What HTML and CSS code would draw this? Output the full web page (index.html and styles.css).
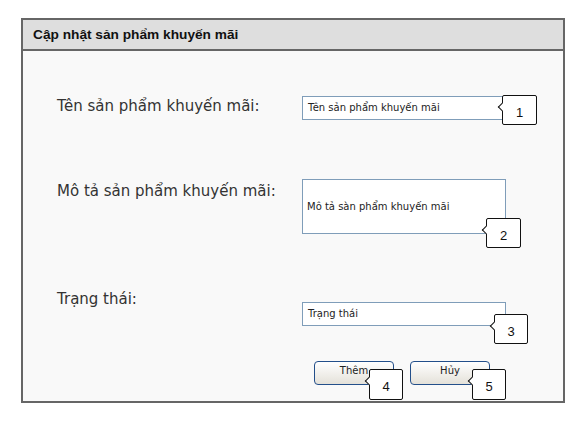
FILE: index.html
```
<!DOCTYPE html>
<html lang="vi">

<head>
    <meta charset="UTF-8">
    <title>Cập nhật sản phẩm khuyến mãi</title>
    <link rel="stylesheet" href="styles.css">
</head>

<body>

    <section class="khung">
        <h1 class="tieude">Cập nhật sản phẩm khuyến mãi</h1>

        <div class="noidung">
            <div class="dong dong1">
                <label class="nhan">Tên sản phẩm khuyến mãi:</label>
                <div class="truong">
                    <div class="o">Tên sản phẩm khuyến mãi</div>
                    <span class="chu so1">1</span>
                </div>
            </div>

            <div class="dong dong2">
                <label class="nhan">Mô tả sản phẩm khuyến mãi:</label>
                <div class="truong">
                    <div class="o o-lon">Mô tả sàn phẩm khuyến mãi</div>
                    <span class="chu so2">2</span>
                </div>
            </div>

            <div class="dong dong3">
                <label class="nhan">Trạng thái:</label>
                <div class="truong">
                    <div class="o">Trạng thái</div>
                    <span class="chu so3">3</span>
                </div>
            </div>

            <nav class="nut-hang">
                <div class="nut-boc">
                    <button class="nut">Thêm</button>
                    <span class="chu so4">4</span>
                </div>
                <div class="nut-boc">
                    <button class="nut">Hủy</button>
                    <span class="chu so5">5</span>
                </div>
            </nav>
        </div>
    </section>

</body>

</html>
```

FILE: styles.css
```
body {
    margin: 0;
    background-color: #ffffff;
    font-family: "DejaVu Sans", Tahoma, sans-serif;
    color: #222222;
}

.khung {
    margin: 18px 0 0 21px;
    width: 544px;
    height: 385px;
    box-sizing: border-box;
    border: 2px solid #666666;
    background-color: #f9f9f9;
}

.tieude {
    margin: 0;
    height: 31px;
    box-sizing: border-box;
    padding: 7px 0 0 10px;
    background-color: #dedede;
    border-bottom: 2px solid #666666;
    font-family: "Liberation Sans", Arial, sans-serif;
    font-size: 13.7px;
    font-weight: bold;
    color: #111111;
}

.noidung {
    padding: 45px 0 0 34px;
}

.dong {
    display: grid;
    grid-template-columns: 245px 204px;
    align-items: start;
}

.nhan {
    font-size: 15px;
    line-height: 20px;
    color: #333333;
}

.truong {
    position: relative;
}

.o {
    height: 24px;
    box-sizing: border-box;
    border: 1px solid #7f9db9;
    background-color: #ffffff;
    padding: 0 5px;
    font-size: 10px;
    line-height: 22px;
    color: #222222;
}

.o-lon {
    height: 55px;
    line-height: 53px;
    padding-left: 4px;
}

.dong2 {
    margin-top: 59px;
}

.dong2 .nhan {
    margin-top: 2px;
}

.dong3 {
    margin-top: 55px;
}

.dong3 .truong {
    margin-top: 13px;
}

.nut-hang {
    display: flex;
    gap: 16px;
    margin: 33px 0 0 257px;
}

.nut-boc {
    position: relative;
}

.nut {
    width: 80px;
    height: 24px;
    border: 1px solid #234f8a;
    border-radius: 4px;
    background: linear-gradient(#ffffff, #e4e1d9);
    font-family: "DejaVu Sans", Tahoma, sans-serif;
    font-size: 10px;
    color: #222222;
    padding: 0 0 4px 0;
}

/* chu thich so */
.chu {
    position: absolute;
    width: 35px;
    height: 30px;
    box-sizing: border-box;
    border: 1px solid #111111;
    border-radius: 2px;
    background-color: #ffffff;
    font-family: "Liberation Sans", Arial, sans-serif;
    font-size: 13px;
    line-height: 30px;
    text-align: center;
    padding-top: 2px;
    color: #111111;
}

.chu::before {
    content: "";
    position: absolute;
    left: -4px;
    top: 8px;
    width: 5px;
    height: 5px;
    background-color: #ffffff;
    border-left: 1px solid #111111;
    border-bottom: 1px solid #111111;
    transform: rotate(45deg);
}

.so1 {
    left: 200px;
    top: -1px;
}

.so2 {
    left: 184px;
    top: 39px;
}

.so3 {
    left: 192px;
    top: 12px;
    width: 34px;
}

.so4 {
    left: 55px;
    top: 10px;
    width: 34px;
    height: 31px;
}

.so5 {
    left: 62px;
    top: 10px;
    width: 34px;
    height: 31px;
}
```
